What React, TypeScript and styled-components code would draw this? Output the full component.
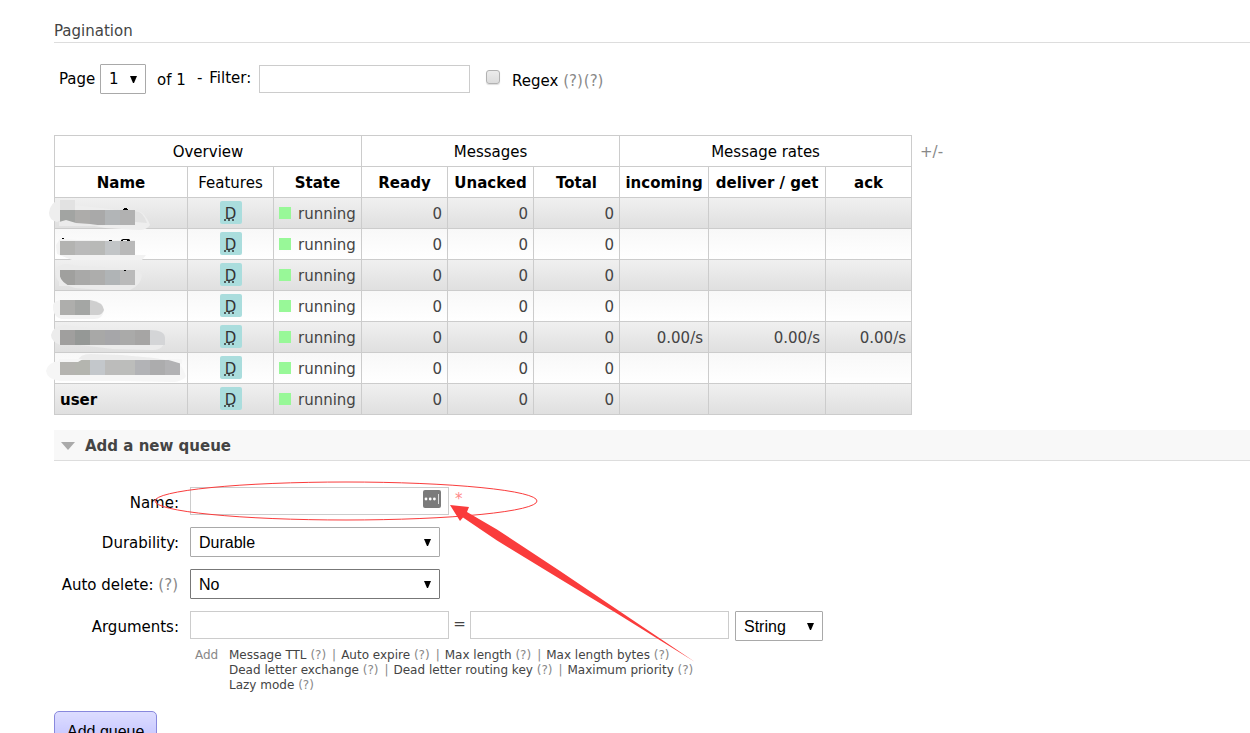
import React from "react";
import styled, { createGlobalStyle } from "styled-components";

const GlobalStyle = createGlobalStyle`
  html, body { margin: 0; background: #fff; }
  body { font-family: "DejaVu Sans", Verdana, sans-serif; font-size: 15px; line-height: 18px; color: #444; }
  * { box-sizing: border-box; }
`;

const Page = styled.main`
  height: 100vh;
  overflow-y: auto;
  scrollbar-width: none;
  padding: 22px 0 24px 54px;
`;

const SubHeading = styled.h3`
  margin: 0;
  padding-bottom: 2px;
  border-bottom: 1px solid #ddd;
  font-size: 15px;
  font-weight: normal;
`;

const PagerRow = styled.form`
  display: flex;
  align-items: flex-start;
  padding: 21px 5px 0;
  color: #000;
`;

const PagerText = styled.label<{ $left?: number; $top?: number }>`
  margin-left: ${(p) => p.$left ?? 0}px;
  padding-top: ${(p) => p.$top ?? 6}px;
  white-space: pre;
`;

const FilterSlot = styled.span`
  display: flex;
  padding: 1px 0 0 3px;
`;

const TextInput = styled.input<{ $width: number }>`
  width: ${(p) => p.$width}px;
  height: 28px;
  padding: 4px;
  border: 1px solid #ccc;
  border-radius: 0;
  font: 16px "Liberation Sans", Arial, sans-serif;
  outline: none;
`;

const SelectBox = styled.span<{ $width: number }>`
  position: relative;
  display: inline-flex;
  width: ${(p) => p.$width}px;
  height: 30px;
`;

const SelectControl = styled.select<{ $family?: string; $border?: string }>`
  appearance: none;
  width: 100%;
  padding: 0 8px;
  border: 1px solid ${(p) => p.$border ?? "#a9a9a9"};
  border-radius: 1px;
  background: #fff;
  color: #000;
  font: ${(p) => p.$family ?? '16px "Liberation Sans", Arial, sans-serif'};
`;

const SelectArrow = styled.svg`
  position: absolute;
  right: 9px;
  top: 12px;
  pointer-events: none;
`;

const Checkbox = styled.input`
  appearance: none;
  width: 14px;
  height: 14px;
  margin: 6px 12px 0 16px;
  border: 1px solid #b2b2b2;
  border-radius: 3px;
  background: linear-gradient(#ececec, #dcdcdc);
  box-shadow: 0 1px 1px #ddd;
`;

const Help = styled.a`
  padding-right: 1px;
  color: #888;
  text-decoration: none;
`;

const TableArea = styled.div`
  position: relative;
  display: flex;
  align-items: flex-start;
  margin-top: 41px;
`;

const QueueTable = styled.table`
  width: 858px;
  table-layout: fixed;
  border-collapse: collapse;
`;

const HeadCell = styled.th<{ $plain?: boolean }>`
  height: 31px;
  padding: 2px 0 0;
  border: 1px solid #ccc;
  color: #000;
  font-weight: ${(p) => (p.$plain ? "normal" : "bold")};
  white-space: nowrap;
`;

const BodyRow = styled.tr`
  background: linear-gradient(#f8f8f8, #fff);
  &:nth-child(odd) { background: linear-gradient(#f0f0f0, #dfdfdf); }
`;

const Cell = styled.td<{ $align?: string }>`
  height: 31px;
  padding: 2px 5px 0;
  border: 1px solid #ccc;
  text-align: ${(p) => p.$align ?? "left"};
  white-space: nowrap;
`;

const NameCell = styled(Cell)`
  color: #000;
  font-weight: bold;
`;

const FeatureCell = styled(Cell)`
  padding: 0 5px 1px;
`;

const Feature = styled.abbr`
  display: block;
  width: 22px;
  height: 23px;
  margin: 0 auto;
  padding-top: 4px;
  border-radius: 2px;
  background: #aadddd;
  color: #333;
  text-align: center;
  text-decoration: underline dotted;
`;

const State = styled.span`
  display: flex;
  align-items: center;
  gap: 7px;
  &::before { content: ""; width: 12px; height: 12px; margin-bottom: 2px; background: #98f898; }
`;

const ColumnToggle = styled(Help)`
  margin: 8px 0 0 8px;
`;

const Smudges = styled.svg`
  position: absolute;
  left: -8px;
  top: 60px;
  pointer-events: none;
`;

const SectionHeading = styled.h2`
  display: flex;
  align-items: center;
  gap: 10px;
  height: 31px;
  margin: 15px 0 0;
  padding: 2px 7px 0;
  border-bottom: 1px solid #ddd;
  background: #f8f8f8;
  font-size: 15px;
`;

const QueueForm = styled.form`
  position: relative;
  padding-top: 26px;
  color: #000;
`;

const FieldRow = styled.div<{ $gap: number }>`
  display: flex;
  align-items: flex-start;
  margin-bottom: ${(p) => p.$gap}px;
`;

const FieldLabel = styled.div`
  width: 125px;
  margin-right: 11px;
  padding-top: 7px;
  text-align: right;
  white-space: nowrap;
`;

const NameField = styled.span`
  position: relative;
  display: flex;
`;

const FillIcon = styled.svg`
  position: absolute;
  right: 8px;
  top: 3px;
`;

const Mandatory = styled.span`
  margin-left: 6px;
  padding-top: 3px;
  color: #f88;
`;

const Equals = styled.span`
  width: 21px;
  padding-top: 4px;
  text-align: center;
  color: #444;
`;

const TypeSlot = styled.span`
  display: flex;
  margin-left: 6px;
`;

const Hints = styled.div`
  display: grid;
  grid-template-columns: 34px 1fr;
  padding-left: 141px;
  color: #888;
  font-size: 12px;
  line-height: 15px;
`;

const HintLink = styled.a`
  color: #444;
  text-decoration: none;
`;

const Separator = styled.span`
  margin: 0 5px;
`;

const AddButton = styled.button`
  height: 41px;
  margin-top: 18px;
  padding: 0 12px;
  border: 1px solid #8888dd;
  border-radius: 5px;
  background: linear-gradient(#ddddff, #bbbbff);
  color: #000;
  font: 16px "Liberation Sans", Arial, sans-serif;
`;

const Annotation = styled.svg`
  position: absolute;
  left: 96px;
  top: 15px;
  pointer-events: none;
`;

type SelectProps = { id: string; label?: string; width: number; options: string[]; family?: string; border?: string };

function Select({ id, label, width, options, family, border }: SelectProps) {
  return (
    <SelectBox $width={width}>
      <SelectControl id={id} $family={family} $border={border} aria-label={label}>
        {options.map((o) => <option key={o}>{o}</option>)}
      </SelectControl>
      <SelectArrow width="7" height="7" viewBox="0 0 7 7"><path d="M0 0H7L4 7H3Z" fill="#000" /></SelectArrow>
    </SelectBox>
  );
}

const columns = [133, 86, 88, 86, 86, 86, 89, 117, 86];
const queues = [
  { name: "" }, { name: "" }, { name: "" }, { name: "" },
  { name: "", rate: "0.00/s" }, { name: "" }, { name: "user" },
];

const hints = [
  ["Message TTL", "Auto expire", "Max length", "Max length bytes"],
  ["Dead letter exchange", "Dead letter routing key", "Maximum priority"],
  ["Lazy mode"],
];

type Strip = { y: number; h: number; colors: string[] };
const strips: Strip[] = [
  { y: 210, h: 15, colors: ["#a2a4a2", "#adacaa", "#a9a9a9", "#b2b5b7", "#b1b1b1"] },
  { y: 241, h: 14, colors: ["#b3b3b1", "#bababa", "#b8b9b7", "#c2c5c7", "#b9b9b9"] },
  { y: 270, h: 15, colors: ["#a0a09e", "#a9a9a8", "#adadac", "#b0b4b6", "#bababa"] },
  { y: 300, h: 15, colors: ["#aeaeac", "#a4a6a4"] },
  { y: 330, h: 15, colors: ["#a09f9e", "#959896", "#a8a8a7", "#a6a6a9", "#aaaaa9", "#a6a5a4"] },
  { y: 360, h: 15, colors: ["#b5b4b0", "#b4b5af", "#c3c7cb", "#bcbcbb", "#bcbdbb", "#b2b3b6", "#acacad", "#b2b2b4"] },
];

function NameSmudges() {
  return (
    <Smudges width="145" height="190" viewBox="46 195 145 190" aria-hidden="true">
      <path d="M49 213Q50 202 60 200L75 201V205L102 208L122 211H135Q142 211 145 216Q149 221 150 225Q147 230 139 230L105 228L80 223L61 220L57 222Q49 220 49 213Z" fill="#eeeeee" />
      <path d="M135 211Q143 211 147 223L135 222Z" fill="#e2e2e2" />
      <path d="M60 200H75V210H60Z" fill="#e2e2e2" />
      <path d="M56 245L60 239L78 240H135V255L146 255L142 260H72L57 254Z" fill="#f2f2f2" />
      <path d="M56 272Q57 264 67 264L80 266L104 267L135 270Q142 272 142 276Q141 285 130 290L103 290L75 288L60 283Q55 278 56 272Z" fill="#ebebeb" />
      <path d="M53 305Q54 301 60 300H90Q103 301 104 310Q103 319 94 319H61Q52 316 53 305Z" fill="#f3f3f3" />
      <path d="M90 300Q103 302 104 310Q102 315 98 315H90Z" fill="#cfcfcf" />
      <path d="M51 335Q53 326 64 325L90 328L148 330Q165 331 165 339Q164 350 153 350L113 349L80 345H60Q51 341 51 335Z" fill="#ececec" />
      <path d="M150 330Q165 330 165 338V345H150Z" fill="#d4d5d7" />
      <path d="M46 371Q48 362 59 361L78 361Q80 354 90 354L121 355L154 358L177 361L183 369L186 376Q184 380 175 382L120 381L60 381Q47 379 46 371Z" fill="#f6f6f6" />
      <path d="M78 361Q80 354 90 354L121 355L154 358L165 360Z" fill="#ececec" />
      {strips.map((s) =>
        s.colors.map((c, i) => <rect key={`${s.y}-${i}`} x={60 + i * 15} y={s.y} width={15} height={s.h} fill={c} />),
      )}
      <path d="M59 226V222L66 220L76 223L90 224L105 226ZM59 274Q62 284 71 286H59Z" fill="#ebebeb" />
      <path d="M59 359H83L78 362H59ZM165 359H182V364L172 361Z" fill="#f6f6f6" />
      <path d="M123 210V209H124V208H127V209H128V210ZM62 239V238H64V239ZM109 241V240H112V241ZM121 241V240L123 239H129L130 240V241H127V240H123V241ZM124 271V270H126V271Z" fill="#000" />
    </Smudges>
  );
}

export default function App() {
  return (
    <>
      <GlobalStyle />
      <Page>
        <SubHeading>Pagination</SubHeading>
        <PagerRow>
          <PagerText htmlFor="page">Page </PagerText>
          <Select id="page" width={46} options={["1"]} family={'15px "DejaVu Sans", sans-serif'} />
          <PagerText as="span" $left={11} $top={7}>of 1</PagerText>
          <PagerText as="span" $left={11} $top={5}>-</PagerText>
          <PagerText htmlFor="filter" $left={7} $top={5}>Filter: </PagerText>
          <FilterSlot><TextInput id="filter" $width={211} /></FilterSlot>
          <Checkbox id="regex" type="checkbox" />
          <PagerText htmlFor="regex" $top={8}>Regex </PagerText>
          <PagerText as="span" $top={8}><Help href="#regex-help">(?)</Help><Help href="#filter-help">(?)</Help></PagerText>
        </PagerRow>

        <TableArea>
          <QueueTable>
            <colgroup>{columns.map((w, i) => <col key={i} width={w} />)}</colgroup>
            <thead>
              <tr>
                <HeadCell $plain colSpan={3}>Overview</HeadCell>
                <HeadCell $plain colSpan={3}>Messages</HeadCell>
                <HeadCell $plain colSpan={3}>Message rates</HeadCell>
              </tr>
              <tr>
                <HeadCell>Name</HeadCell>
                <HeadCell $plain>Features</HeadCell>
                <HeadCell>State</HeadCell>
                <HeadCell>Ready</HeadCell>
                <HeadCell>Unacked</HeadCell>
                <HeadCell>Total</HeadCell>
                <HeadCell>incoming</HeadCell>
                <HeadCell>deliver / get</HeadCell>
                <HeadCell>ack</HeadCell>
              </tr>
            </thead>
            <tbody>
              {queues.map((q, i) => (
                <BodyRow key={i}>
                  <NameCell>{q.name}</NameCell>
                  <FeatureCell><Feature title="durable">D</Feature></FeatureCell>
                  <Cell><State>running</State></Cell>
                  {[0, 1, 2].map((n) => <Cell key={n} $align="right">0</Cell>)}
                  {[3, 4, 5].map((n) => <Cell key={n} $align="right">{q.rate}</Cell>)}
                </BodyRow>
              ))}
            </tbody>
          </QueueTable>
          <ColumnToggle href="#columns">+/-</ColumnToggle>
          <NameSmudges />
        </TableArea>

        <SectionHeading>
          <svg width="14" height="8" viewBox="0 0 14 8"><path d="M0 0H14L7 8Z" fill="#aaa" /></svg>
          Add a new queue
        </SectionHeading>

        <QueueForm>
          <FieldRow $gap={12}>
            <FieldLabel><label htmlFor="name">Name:</label></FieldLabel>
            <NameField>
              <TextInput id="name" $width={259} />
              <FillIcon width="18" height="18" viewBox="0 0 18 18">
                <rect width="18" height="18" rx="2" fill="#7b7b7b" />
                <path d="M15.5 4V14" stroke="#ddd" fill="none" />
                <circle cx="3" cy="9" r="1.4" fill="#fff" />
                <circle cx="7.2" cy="9" r="1.4" fill="#fff" />
                <circle cx="11.4" cy="9" r="1.4" fill="#fff" />
              </FillIcon>
            </NameField>
            <Mandatory>*</Mandatory>
          </FieldRow>
          <FieldRow $gap={12}>
            <FieldLabel><label htmlFor="durability">Durability:</label></FieldLabel>
            <Select id="durability" width={250} options={["Durable", "Transient"]} />
          </FieldRow>
          <FieldRow $gap={12}>
            <FieldLabel><label htmlFor="auto-delete">Auto delete:</label> <Help href="#auto-delete-help">(?)</Help></FieldLabel>
            <Select id="auto-delete" width={250} options={["No", "Yes"]} border="#777" />
          </FieldRow>
          <FieldRow $gap={7}>
            <FieldLabel><label htmlFor="arg-key">Arguments:</label></FieldLabel>
            <TextInput id="arg-key" $width={259} />
            <Equals>=</Equals>
            <TextInput id="arg-value" aria-label="Argument value" $width={259} />
            <TypeSlot>
              <Select id="arg-type" label="Argument type" width={88} options={["String", "Number", "Boolean", "List"]} />
            </TypeSlot>
          </FieldRow>
          <Hints>
            <span>Add</span>
            <div>
              {hints.map((line, n) => (
                <div key={n}>
                  {line.map((h, i) => (
                    <React.Fragment key={h}>
                      <HintLink href="#argument">{h}</HintLink> <Help href="#argument-help">(?)</Help>
                      {i < line.length - 1 && <Separator>|</Separator>}
                    </React.Fragment>
                  ))}
                </div>
              ))}
            </div>
          </Hints>
          <AddButton type="button">Add queue</AddButton>
          <Annotation width="550" height="190" viewBox="150 476 550 190" aria-hidden="true">
            <ellipse cx="346" cy="501" rx="191" ry="19" fill="none" stroke="#fa3c3c" />
            <path d="M450 505L469 507L467 512L497 529.5L560 571L617 609.5L695 662L617 613.5L560 579L497 540.5L463 517.5L460 521Z" fill="#fa3c3c" />
          </Annotation>
        </QueueForm>
      </Page>
    </>
  );
}
